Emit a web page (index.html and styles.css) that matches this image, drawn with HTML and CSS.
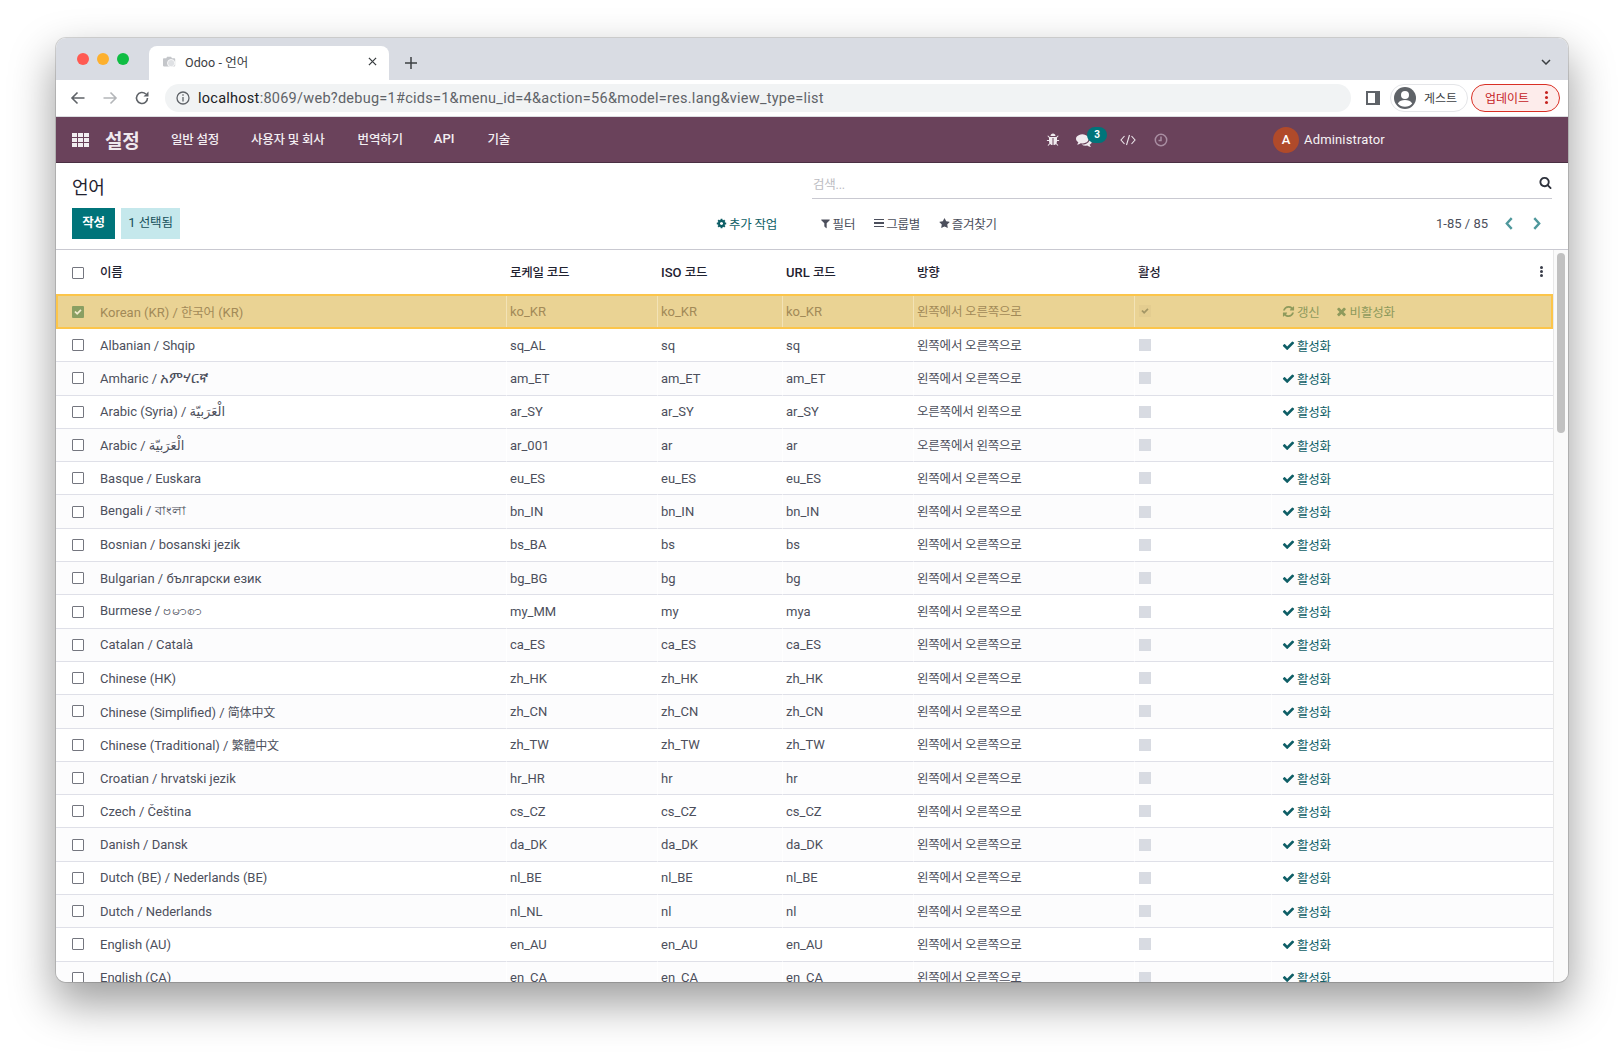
FILE: index.html
```html
<!DOCTYPE html>
<html lang="ko">
<head>
<meta charset="utf-8">
<title>Odoo - 언어</title>
<link rel="stylesheet" href="styles.css">
</head>
<body>
<svg class="sprite" xmlns="http://www.w3.org/2000/svg">
  <symbol id="i-check" viewBox="0 0 1792 1792"><path d="M1671 566q0 40-28 68l-724 724-136 136q-28 28-68 28t-68-28l-136-136-362-362q-28-28-28-68t28-68l136-136q28-28 68-28t68 28l294 295 656-657q28-28 68-28t68 28l136 136q28 28 28 68z"/></symbol>
  <symbol id="i-refresh" viewBox="0 0 1792 1792"><path d="M1639 1056q0 5-1 7-64 268-268 434.5t-478 166.5q-146 0-282.5-55t-243.5-157l-129 129q-19 19-45 19t-45-19-19-45v-448q0-26 19-45t45-19h448q26 0 45 19t19 45-19 45l-137 137q71 66 161 102t187 36q134 0 250-65t186-179q11-17 53-117 8-23 30-23h192q13 0 22.5 9.5t9.5 22.5zm25-800v448q0 26-19 45t-45 19h-448q-26 0-45-19t-19-45 19-45l138-138q-148-137-349-137-134 0-250 65t-186 179q-11 17-53 117-8 23-30 23h-199q-13 0-22.5-9.5t-9.5-22.5v-7q65-268 270-434.5t480-166.5q146 0 284 55.5t245 156.5l130-129q19-19 45-19t45 19 19 45z"/></symbol>
  <symbol id="i-times" viewBox="0 0 1792 1792"><path d="M1490 1322q0 40-28 68l-136 136q-28 28-68 28t-68-28l-294-294-294 294q-28 28-68 28t-68-28l-136-136q-28-28-28-68t28-68l294-294-294-294q-28-28-28-68t28-68l136-136q28-28 68-28t68 28l294 294 294-294q28-28 68-28t68 28l136 136q28 28 28 68t-28 68l-294 294 294 294q28 28 28 68z"/></symbol>
  <symbol id="i-star" viewBox="0 0 1792 1792"><path d="M1728 647q0 22-26 48l-363 354 86 500q1 7 1 20 0 21-10.5 35.5t-30.5 14.5q-19 0-40-12l-449-236-449 236q-22 12-40 12-21 0-31.5-14.5t-10.5-35.5q0-6 2-20l86-500-364-354q-25-27-25-48 0-37 56-46l502-73 225-455q19-41 49-41t49 41l225 455 502 73q56 9 56 46z"/></symbol>
  <symbol id="i-search" viewBox="0 0 1792 1792"><path d="M1216 832q0-185-131.500-316.500t-316.500-131.500-316.500 131.500-131.500 316.500 131.500 316.500 316.500 131.500 316.500-131.500 131.500-316.500zm512 832q0 52-38 90t-90 38q-54 0-90-38l-343-342q-179 124-399 124-143 0-273.500-55.500t-225-150-150-225-55.500-273.500 55.500-273.500 150-225 225-150 273.500-55.500 273.500 55.500 225 150 150 225 55.500 273.500q0 220-124 399l343 343q37 37 37 90z"/></symbol>
  <symbol id="i-filter" viewBox="0 0 1792 1792"><path d="M1595 295q17 41-14 70l-493 493v742q0 42-39 59-13 5-25 5-27 0-45-19l-256-256q-19-19-19-45v-486l-493-493q-31-29-14-70 17-39 59-39h1280q42 0 59 39z"/></symbol>
  <symbol id="i-cog" viewBox="0 0 1792 1792"><path d="M1152 896q0-106-75-181t-181-75-181 75-75 181 75 181 181 75 181-75 75-181zm512-109v222q0 12-8 23t-20 13l-185 28q-19 54-39 91 35 50 107 138 10 12 10 25t-9 23q-27 37-99 108t-94 71q-12 0-26-9l-138-108q-44 23-91 38-16 136-29 186-7 28-36 28h-222q-14 0-24.500-8.500t-11.500-21.500l-28-184q-49-16-90-37l-141 107q-10 9-25 9-14 0-25-11-126-114-165-168-7-10-7-23 0-12 8-23 15-21 51-66.500t54-70.500q-27-50-41-99l-183-27q-13-2-21-12.500t-8-23.500v-222q0-12 8-23t19-13l186-28q14-46 39-92-40-57-107-138-10-12-10-24 0-10 9-23 26-36 98.500-107.500t94.500-71.500q13 0 26 10l138 107q44-23 91-38 16-136 29-186 7-28 36-28h222q14 0 24.500 8.500t11.500 21.500l28 184q49 16 90 37l142-107q9-9 24-9 13 0 25 10 129 119 165 170 7 8 7 22 0 12-8 23-15 21-51 66.500t-54 70.500q26 50 41 98l183 28q13 2 21 12.500t8 23.500z"/></symbol>
  <symbol id="i-bug" viewBox="0 0 1792 1792"><path d="M1696 960q0 26-19 45t-45 19h-224q0 171-67 290l208 209q19 19 19 45t-19 45q-18 19-45 19t-45-19l-198-197q-5 5-15 13t-42 28.500-65 36.500-82 29-97 13v-896h-128v896q-51 0-101.500-13.500t-87-33-66-39-43.500-32.500l-15-14-183 207q-20 21-48 21-24 0-43-16-19-18-20.500-44.500t15.500-46.500l202-227q-58-114-58-274h-224q-26 0-45-19t-19-45 19-45 45-19h224v-294l-173-173q-19-19-19-45t19-45 45-19 45 19l173 173h844l173-173q19-19 45-19t45 19 19 45-19 45l-173 173v294h224q26 0 45 19t19 45zm-480-576h-640q0-133 93.500-226.500t226.500-93.500 226.500 93.500 93.500 226.500z"/></symbol>
  <symbol id="i-comments" viewBox="0 0 1792 1792"><path d="M1408 768q0 139-94 257t-256.500 186.500-353.500 68.500q-86 0-176-16-124 88-278 128-36 9-86 16h-3q-11 0-20.500-8t-11.500-21q-1-3-1-6.500t.5-6.500 2-6l2.500-5 3.500-5.500 4-5 4.500-5 4-4.500q5-6 23-25t26-29.500 22.500-29 25-38.500 20.500-44q-124-72-195-177t-71-224q0-139 94-257t256.500-186.500 353.500-68.500 353.500 68.500 256.500 186.500 94 257zm384 256q0 120-71 224.500t-195 176.500q10 24 20.500 44t25 38.500 22.500 29 26 29.500 23 25q1 1 4 4.500t4.500 5 4 5 3.500 5.500l2.500 5 2 6 .5 6.500-1 6.500q-3 14-13 22t-22 7q-50-7-86-16-154-40-278-128-90 16-176 16-271 0-472-132 58 4 88 4 161 0 309-45t264-129q125-92 192-212t67-254q0-77-23-152 129 71 204 178t75 230z"/></symbol>
</svg>

<div class="window">
  <div class="tabstrip">
    <div class="lights"><span class="light red"></span><span class="light amber"></span><span class="light green"></span></div>
    <div class="tab">
      <svg class="fav" viewBox="0 0 16 16"><path d="M1 4h3l1-2h5l1 2h3a1 1 0 0 1 1 1v8a1 1 0 0 1-1 1H1a1 1 0 0 1-1-1V5a1 1 0 0 1 1-1z" fill="#c4c6ca"/><circle cx="10" cy="10" r="4.500" fill="#dfe1e4" stroke="#fff"/></svg>
      <span class="tab-title">Odoo - 언어</span>
      <svg class="tab-close" viewBox="0 0 10 10"><path d="M1 1l8 8M9 1l-8 8"/></svg>
    </div>
    <svg class="newtab" viewBox="0 0 12 12"><path d="M6 0v12M0 6h12"/></svg>
    <svg class="tabs-menu" viewBox="0 0 10 6"><path d="M1 1l4 4 4-4"/></svg>
  </div>

  <div class="toolbar">
    <svg class="tb-ico" viewBox="0 0 16 16"><path d="M14.500 8H2M7.500 2.500L2 8l5.500 5.500"/></svg>
    <svg class="tb-ico light-ico" viewBox="0 0 16 16"><path d="M1.500 8H14M8.500 2.500L14 8l-5.500 5.500"/></svg>
    <svg class="tb-ico" viewBox="0 0 16 16"><path d="M13.500 8A5.500 5.500 0 1 1 11.800 4"/><path class="solid" d="M14.500 1.500v5h-5z"/></svg>
    <div class="address">
      <svg class="info" viewBox="0 0 14 14"><circle cx="7" cy="7" r="6"/><path d="M7 6v4.500M7 3.300v1.500"/></svg>
      <span class="url"><span class="host">localhost</span>:8069/web?debug=1#cids=1&amp;menu_id=4&amp;action=56&amp;model=res.lang&amp;view_type=list</span>
    </div>
    <div class="side-ico"></div>
    <div class="guest">
      <svg class="guest-ava" viewBox="0 0 22 22"><circle cx="11" cy="11" r="11" fill="#5f6368"/><circle cx="11" cy="8" r="4" fill="#fff"/><path d="M3.800 16.500c1.500-2.700 4.300-3.500 7.200-3.500s5.700.8 7.200 3.500a9.500 9.500 0 0 1-14.400 0z" fill="#fff"/></svg>
      <span>게스트</span>
    </div>
    <div class="update">
      <span>업데이트</span>
      <span class="kebab"><i></i><i></i><i></i></span>
    </div>
  </div>

  <nav class="navbar">
    <div class="apps"><i></i><i></i><i></i><i></i><i></i><i></i><i></i><i></i><i></i></div>
    <span class="brand">설정</span>
    <a class="menu ko m1">일반 설정</a>
    <a class="menu ko m2">사용자 및 회사</a>
    <a class="menu ko m3">번역하기</a>
    <a class="menu m4">API</a>
    <a class="menu ko m5">기술</a>
    <div class="systray">
      <svg class="sys bug"><use href="#i-bug"/></svg>
      <span class="msg"><svg class="sys comm"><use href="#i-comments"/></svg><span class="badge">3</span></span>
      <svg class="code" viewBox="0 0 16 12"><path d="M4.500 2L1 6l3.500 4M11.500 2L15 6l-3.500 4M9.500 1L6.500 11"/></svg>
      <svg class="clock" viewBox="0 0 14 14"><circle cx="7" cy="7" r="5.700"/><path d="M7 3.500V7.500H4.500"/></svg>
      <span class="avatar">A</span>
      <span class="username">Administrator</span>
    </div>
  </nav>

  <div class="control">
    <div class="c-row1">
      <h1 class="title">언어</h1>
      <div class="search"><span class="placeholder ko">검색...</span><svg class="search-ico"><use href="#i-search"/></svg></div>
    </div>
    <div class="c-row2">
      <div class="btns"><a class="btn primary ko">작성</a><a class="btn selected">1 <span class="ko">선택됨</span></a></div>
      <a class="act ko action"><svg><use href="#i-cog"/></svg>추가 작업</a>
      <a class="act ko filter"><svg><use href="#i-filter"/></svg>필터</a>
      <a class="act ko group"><span class="bars"><i></i><i></i><i></i></span>그룹별</a>
      <a class="act ko fav-act"><svg><use href="#i-star"/></svg>즐겨찾기</a>
      <span class="pager">1-85 / 85</span>
      <svg class="chev c-prev" viewBox="0 0 8 12"><path d="M6.500 1L2 6l4.500 5"/></svg>
      <svg class="chev c-next" viewBox="0 0 8 12"><path d="M1.500 1L6 6l-4.500 5"/></svg>
    </div>
  </div>

  <div class="listarea">
    <div class="tablewrap">
      <table class="list">
        <colgroup><col class="w-sel"><col class="w-name"><col class="w-loc"><col class="w-iso"><col class="w-url"><col class="w-dir"><col class="w-act"><col class="w-btn"></colgroup>
        <thead>
          <tr><th class="sel"><span class="cb"></span></th><th class="ko">이름</th><th class="ko">로케일 코드</th><th>ISO <span class="ko">코드</span></th><th>URL <span class="ko">코드</span></th><th class="ko">방향</th><th class="ko">활성</th><th class="optional"><span class="opt"><i></i><i></i><i></i></span></th></tr>
        </thead>
        <tbody>
          <tr class="current"><td class="sel"><span class="cb on"><svg><use href="#i-check"/></svg></span></td><td>Korean (KR) / <span class="ko">한국어</span> (KR)</td><td>ko_KR</td><td>ko_KR</td><td>ko_KR</td><td>왼쪽에서 오른쪽으로</td><td><span class="ab on"><svg><use href="#i-check"/></svg></span></td><td><a class="rb first"><svg><use href="#i-refresh"/></svg>갱신</a><a class="rb"><svg><use href="#i-times"/></svg>비활성화</a></td></tr>
          <tr><td class="sel"><span class="cb"></span></td><td>Albanian / Shqip</td><td>sq_AL</td><td>sq</td><td>sq</td><td>왼쪽에서 오른쪽으로</td><td><span class="ab"></span></td><td><a class="rb"><svg><use href="#i-check"/></svg>활성화</a></td></tr>
          <tr><td class="sel"><span class="cb"></span></td><td>Amharic / <span class="eth">አምሃርኛ</span></td><td>am_ET</td><td>am_ET</td><td>am_ET</td><td>왼쪽에서 오른쪽으로</td><td><span class="ab"></span></td><td><a class="rb"><svg><use href="#i-check"/></svg>활성화</a></td></tr>
          <tr><td class="sel"><span class="cb"></span></td><td>Arabic (Syria) / الْعَرَبيّة</td><td>ar_SY</td><td>ar_SY</td><td>ar_SY</td><td>오른쪽에서 왼쪽으로</td><td><span class="ab"></span></td><td><a class="rb"><svg><use href="#i-check"/></svg>활성화</a></td></tr>
          <tr><td class="sel"><span class="cb"></span></td><td>Arabic / الْعَرَبيّة</td><td>ar_001</td><td>ar</td><td>ar</td><td>오른쪽에서 왼쪽으로</td><td><span class="ab"></span></td><td><a class="rb"><svg><use href="#i-check"/></svg>활성화</a></td></tr>
          <tr><td class="sel"><span class="cb"></span></td><td>Basque / Euskara</td><td>eu_ES</td><td>eu_ES</td><td>eu_ES</td><td>왼쪽에서 오른쪽으로</td><td><span class="ab"></span></td><td><a class="rb"><svg><use href="#i-check"/></svg>활성화</a></td></tr>
          <tr><td class="sel"><span class="cb"></span></td><td>Bengali / বাংলা</td><td>bn_IN</td><td>bn_IN</td><td>bn_IN</td><td>왼쪽에서 오른쪽으로</td><td><span class="ab"></span></td><td><a class="rb"><svg><use href="#i-check"/></svg>활성화</a></td></tr>
          <tr><td class="sel"><span class="cb"></span></td><td>Bosnian / bosanski jezik</td><td>bs_BA</td><td>bs</td><td>bs</td><td>왼쪽에서 오른쪽으로</td><td><span class="ab"></span></td><td><a class="rb"><svg><use href="#i-check"/></svg>활성화</a></td></tr>
          <tr><td class="sel"><span class="cb"></span></td><td>Bulgarian / български език</td><td>bg_BG</td><td>bg</td><td>bg</td><td>왼쪽에서 오른쪽으로</td><td><span class="ab"></span></td><td><a class="rb"><svg><use href="#i-check"/></svg>활성화</a></td></tr>
          <tr><td class="sel"><span class="cb"></span></td><td>Burmese / <span class="mya">ဗမာစာ</span></td><td>my_MM</td><td>my</td><td>mya</td><td>왼쪽에서 오른쪽으로</td><td><span class="ab"></span></td><td><a class="rb"><svg><use href="#i-check"/></svg>활성화</a></td></tr>
          <tr><td class="sel"><span class="cb"></span></td><td>Catalan / Català</td><td>ca_ES</td><td>ca_ES</td><td>ca_ES</td><td>왼쪽에서 오른쪽으로</td><td><span class="ab"></span></td><td><a class="rb"><svg><use href="#i-check"/></svg>활성화</a></td></tr>
          <tr><td class="sel"><span class="cb"></span></td><td>Chinese (HK)</td><td>zh_HK</td><td>zh_HK</td><td>zh_HK</td><td>왼쪽에서 오른쪽으로</td><td><span class="ab"></span></td><td><a class="rb"><svg><use href="#i-check"/></svg>활성화</a></td></tr>
          <tr><td class="sel"><span class="cb"></span></td><td>Chinese (Simplified) / <span class="zh">简体中文</span></td><td>zh_CN</td><td>zh_CN</td><td>zh_CN</td><td>왼쪽에서 오른쪽으로</td><td><span class="ab"></span></td><td><a class="rb"><svg><use href="#i-check"/></svg>활성화</a></td></tr>
          <tr><td class="sel"><span class="cb"></span></td><td>Chinese (Traditional) / <span class="zh">繁體中文</span></td><td>zh_TW</td><td>zh_TW</td><td>zh_TW</td><td>왼쪽에서 오른쪽으로</td><td><span class="ab"></span></td><td><a class="rb"><svg><use href="#i-check"/></svg>활성화</a></td></tr>
          <tr><td class="sel"><span class="cb"></span></td><td>Croatian / hrvatski jezik</td><td>hr_HR</td><td>hr</td><td>hr</td><td>왼쪽에서 오른쪽으로</td><td><span class="ab"></span></td><td><a class="rb"><svg><use href="#i-check"/></svg>활성화</a></td></tr>
          <tr><td class="sel"><span class="cb"></span></td><td>Czech / Čeština</td><td>cs_CZ</td><td>cs_CZ</td><td>cs_CZ</td><td>왼쪽에서 오른쪽으로</td><td><span class="ab"></span></td><td><a class="rb"><svg><use href="#i-check"/></svg>활성화</a></td></tr>
          <tr><td class="sel"><span class="cb"></span></td><td>Danish / Dansk</td><td>da_DK</td><td>da_DK</td><td>da_DK</td><td>왼쪽에서 오른쪽으로</td><td><span class="ab"></span></td><td><a class="rb"><svg><use href="#i-check"/></svg>활성화</a></td></tr>
          <tr><td class="sel"><span class="cb"></span></td><td>Dutch (BE) / Nederlands (BE)</td><td>nl_BE</td><td>nl_BE</td><td>nl_BE</td><td>왼쪽에서 오른쪽으로</td><td><span class="ab"></span></td><td><a class="rb"><svg><use href="#i-check"/></svg>활성화</a></td></tr>
          <tr><td class="sel"><span class="cb"></span></td><td>Dutch / Nederlands</td><td>nl_NL</td><td>nl</td><td>nl</td><td>왼쪽에서 오른쪽으로</td><td><span class="ab"></span></td><td><a class="rb"><svg><use href="#i-check"/></svg>활성화</a></td></tr>
          <tr><td class="sel"><span class="cb"></span></td><td>English (AU)</td><td>en_AU</td><td>en_AU</td><td>en_AU</td><td>왼쪽에서 오른쪽으로</td><td><span class="ab"></span></td><td><a class="rb"><svg><use href="#i-check"/></svg>활성화</a></td></tr>
          <tr><td class="sel"><span class="cb"></span></td><td>English (CA)</td><td>en_CA</td><td>en_CA</td><td>en_CA</td><td>왼쪽에서 오른쪽으로</td><td><span class="ab"></span></td><td><a class="rb"><svg><use href="#i-check"/></svg>활성화</a></td></tr>
        </tbody>
      </table>
    </div>
    <div class="scrollbar"><div class="thumb"></div></div>
  </div>
</div>
</body>
</html>
```

FILE: styles.css
```css
* { box-sizing: border-box; }
html, body { margin: 0; height: 100%; }
body {
  background: #fff;
  padding: 38px 56px 0;
  height: 1056px;
  overflow: hidden;
  font-family: Roboto, "Noto Sans CJK KR", "DejaVu Sans", sans-serif;
  font-size: 13px;
  color: #4c4f5c;
}
.sprite { display: none; }
a { color: inherit; text-decoration: none; }
i { display: block; }

.ko { font-size: 12.500px; letter-spacing: -.2px; }
.zh { font-size: 12px; letter-spacing: -.2px; }
.eth { font-size: 14.500px; }
.mya { font-size: 14px; }

.window {
  width: 1512px;
  height: 944px;
  background: #fff;
  border-radius: 10px;
  overflow: hidden;
  display: flex;
  flex-direction: column;
  box-shadow: 0 0 0 1px rgba(0,0,0,.14), 0 20px 44px 2px rgba(0,0,0,.38);
}

/* tab strip */
.tabstrip {
  height: 42px;
  flex: none;
  background: #d9dce3;
  display: flex;
  align-items: flex-end;
  padding-left: 21px;
  position: relative;
}
.lights { display: flex; gap: 8px; align-self: flex-start; margin-top: 15px; }
.light { width: 12px; height: 12px; border-radius: 50%; }
.red { background: #ff5a52; }
.amber { background: #fdb02e; }
.green { background: #0fbd43; }
.tab {
  width: 240px;
  height: 34px;
  margin-left: 20px;
  background: #fff;
  border-radius: 8px 8px 0 0;
  display: flex;
  align-items: center;
  padding: 0 0 3px 14px;
  font-size: 12.500px;
  color: #3c4043;
}
.fav { width: 13px; height: 13px; }
.tab-title { margin-left: 9px; letter-spacing: .1px; }
.tab-close { width: 9px; height: 9px; margin-left: auto; margin-right: 12px; fill: none; stroke: #3c4043; stroke-width: 1.400; }
.newtab { width: 12px; height: 12px; margin: 0 0 11px 16px; fill: none; stroke: #3c4043; stroke-width: 1.500; }
.tabs-menu { width: 10px; height: 6px; margin: 0 17px 15px auto; fill: none; stroke: #3c4043; stroke-width: 1.500; }

/* toolbar */
.toolbar {
  height: 37px;
  flex: none;
  background: #fff;
  border-bottom: 1px solid #dcdde1;
  display: flex;
  align-items: center;
  padding: 0 8px 1px 14px;
}
.tb-ico { width: 16px; height: 16px; margin-right: 16px; flex: none; fill: none; stroke: #5f6368; stroke-width: 1.600; }
.tb-ico .solid { fill: #5f6368; stroke: none; }
.light-ico { stroke: #b4b6b9; }
.address {
  width: 1186px;
  height: 28px;
  margin-left: -1px;
  background: #f1f3f4;
  border-radius: 14px;
  display: flex;
  align-items: center;
  padding: 1px 0 0 11px;
  flex: none;
  font-size: 14.500px;
  color: #5f6368;
  letter-spacing: .26px;
}
.info { width: 14px; height: 14px; margin-right: 8px; fill: none; stroke: #5f6368; stroke-width: 1.300; }
.host { color: #202124; }
.side-ico {
  width: 14px;
  height: 14px;
  margin-left: 15px;
  flex: none;
  background: #fff;
  border: 2px solid #5f6368;
  border-right-width: 5px;
}
.guest {
  width: 78px;
  height: 28px;
  margin-left: 10px;
  border: 1px solid #e4e5e8;
  border-radius: 14px;
  display: flex;
  align-items: center;
  padding-left: 3px;
  font-size: 12px;
  color: #3c4043;
  flex: none;
}
.guest-ava { width: 22px; height: 22px; margin-right: 8px; }
.update {
  width: 89px;
  height: 28px;
  margin-left: 3px;
  border: 1px solid #d93025;
  border-radius: 14px;
  background: #fdeceb;
  color: #c5221f;
  font-size: 12px;
  display: flex;
  align-items: center;
  padding-left: 13px;
  flex: none;
}
.kebab { margin-left: auto; margin-right: 11px; display: flex; flex-direction: column; gap: 2px; }
.kebab i { width: 3px; height: 3px; border-radius: 50%; background: #c5221f; }

/* navbar */
.navbar {
  height: 46px;
  flex: none;
  background: #6a425b;
  border-bottom: 1px solid #4a2f42;
  display: flex;
  align-items: center;
  padding-left: 16px;
  color: #f3eef2;
}
.apps { width: 17px; height: 14px; display: grid; grid-template-columns: repeat(3, 5px); grid-template-rows: repeat(3, 4px); gap: 1px 1px; }
.apps i { background: #f2eef1; }
.brand { font-size: 19px; letter-spacing: -.3px; font-weight: 700; margin-left: 16px; color: #efe9ee; }
.menu { font-weight: 500; padding-bottom: 2px; }
.m4 { font-size: 13px; }
.m1 { margin-left: 31.500px; }
.m2 { margin-left: 32px; }
.m3 { margin-left: 33px; }
.m4 { margin-left: 31px; }
.m5 { margin-left: 33px; }
.systray { display: flex; align-items: center; margin-left: 536px; }
.sys { fill: #f0ebef; }
.bug { width: 14px; height: 14px; }
.msg { position: relative; display: flex; margin-left: 16px; }
.comm { width: 16px; height: 16px; }
.badge {
  position: absolute;
  left: 11px;
  top: -5px;
  width: 20px;
  height: 16px;
  border-radius: 9px;
  background: #00747a;
  color: #fff;
  font-size: 10px;
  font-weight: 700;
  text-align: center;
  line-height: 15px;
}
.code { width: 16px; height: 12px; margin-left: 28px; fill: none; stroke: #ece6eb; stroke-width: 1.100; }
.clock { width: 14px; height: 14px; margin-left: 18px; fill: none; stroke: #a98ea2; stroke-width: 1.500; }
.avatar {
  width: 26px;
  height: 26px;
  margin-left: 105px;
  border-radius: 50%;
  background: #b04a2a;
  color: #fff;
  font-size: 13px;
  font-weight: 500;
  text-align: center;
  line-height: 26px;
}
.username { margin-left: 5px; font-size: 13px; font-weight: 400; letter-spacing: .15px; color: #f6f2f5; }

/* control panel */
.control { height: 87px; flex: none; background: #fff; border-bottom: 1px solid #c9c9d1; padding: 0 16px; }
.c-row1 { height: 45px; display: flex; }
.title { margin: 13px 0 0; font-size: 18px; letter-spacing: -.3px; line-height: 24px; font-weight: 400; color: #1f2230; white-space: nowrap; width: 36px; flex: none; }
.search {
  width: 740px;
  height: 36px;
  border-bottom: 1px solid #c9c9d1;
  display: flex;
  align-items: center;
  padding: 5px 0 0 1px;
  margin-left: 704px;
}
.placeholder { color: #bcbcc2; }
.search-ico { width: 13px; height: 13px; margin-left: auto; fill: #2f333d; margin-right: 0; margin-top: -1px; }
.c-row2 { height: 31px; display: flex; align-items: center; color: #4c4f5c; }
.btns { display: flex; gap: 6px; }
.btn { height: 31px; line-height: 30px; padding: 0 9px; }
.primary { background: #00747a; color: #fff; font-weight: 700; width: 43px; text-align: center; padding: 0; }
.selected { background: #c5e8ec; color: #164f5a; width: 59px; text-align: center; padding: 0; }
.act { display: flex; align-items: center; gap: 2px; padding-bottom: 1px; }
.act svg { width: 11px; height: 11px; fill: currentColor; flex: none; }
.action { margin-left: 536px; color: #0e5e66; }
.filter { margin-left: 42.500px; }
.group { margin-left: 19px; }
.fav-act { margin-left: 18.500px; }
.bars { width: 10px; display: flex; flex-direction: column; gap: 2px; }
.bars i { height: 1.500px; background: currentColor; }
.pager { margin-left: auto; }
.chev { width: 10px; height: 13px; fill: none; stroke: #4f989c; stroke-width: 2.200; }
.c-prev { margin-left: 16px; }
.c-next { margin-left: 18px; margin-right: 10px; }

/* list */
.listarea { flex: 1; min-height: 0; display: flex; overflow: hidden; }
.tablewrap { width: 1497px; flex: none; overflow: hidden; }
.list { width: 1497px; table-layout: fixed; border-collapse: separate; border-spacing: 0; }
.w-sel { width: 40px; }
.w-name { width: 410px; }
.w-loc { width: 151px; }
.w-iso { width: 125px; }
.w-url { width: 131px; }
.w-dir { width: 221px; }
.w-act { width: 137px; }
.list th {
  height: 44px;
  padding: 0 4px 2px;
  text-align: left;
  font-weight: 500;
  color: #1f2230;
}
.list td {
  height: 33.300px;
  padding: 0 4px 0 3px;
  border-bottom: 1px solid #dfe0e8;
  border-left: 1px solid #fff;
  white-space: nowrap;
  overflow: hidden;
  color: #4c4f5c;
}
.list td:first-child, .list td:nth-child(2) { border-left: 0; padding-left: 4px; }
.list td:nth-child(6) { font-size: 12.500px; letter-spacing: -.2px; padding-bottom: 2px; }
.list tbody tr:nth-child(odd):not(.current) td { background: #fcfcfd; }
.list th.sel { padding: 1px 4px 0 16px; }
.list td.sel { padding-left: 16px; }
.cb { display: block; width: 12px; height: 12px; border: 1px solid #74767f; border-radius: 1px; background: #fff; }
.cb.on { background: #8a9f62; border: 0; display: flex; align-items: center; justify-content: center; }
.cb.on svg { width: 8px; height: 8px; fill: #f3ecd0; }
.ab { display: block; width: 12px; height: 12px; margin-left: 1px; background: #d8dbe2; }
.ab.on { background: #e4cd90; display: flex; align-items: center; justify-content: center; }
.ab.on svg { width: 8px; height: 8px; fill: #a39665; }
.rb { display: inline-flex; align-items: center; gap: 2px; color: #0e5e66; margin-left: 7px; font-size: 12.500px; letter-spacing: -.2px; }
.rb svg { width: 13px; height: 13px; fill: currentColor; }
.rb.first { margin-right: 15px; }
.rb + .rb { margin-left: 0; }
.optional { text-align: right; }
.opt { display: flex; flex-direction: column; gap: 1px; align-items: flex-end; padding-right: 6px; }
.opt i { width: 3px; height: 3px; background: #3a3d4a; border-radius: 50%; }

.list tr.current { outline: 2px solid #fcc54a; outline-offset: -2px; }
.list tr.current td { background: #ead394; color: #a28a58; border-bottom-color: #fcc54a; border-left-color: #f3e3b6; height: 35px; }
.list tr.current td:first-child, .list tr.current td:nth-child(2) { border-left: 0; }
.list tr.current td:last-child { border-left-color: #ead394; }
.list tr.current td.sel { padding-top: 1px; }
.list tr.current .rb { color: #8e9a5c; }

.scrollbar { flex: 1; background: #fafafa; border-left: 1px solid #e8e8e8; padding: 3px 3px 0; }
.thumb { height: 180px; width: 8px; background: #c1c1c1; border-radius: 4px; }
```
